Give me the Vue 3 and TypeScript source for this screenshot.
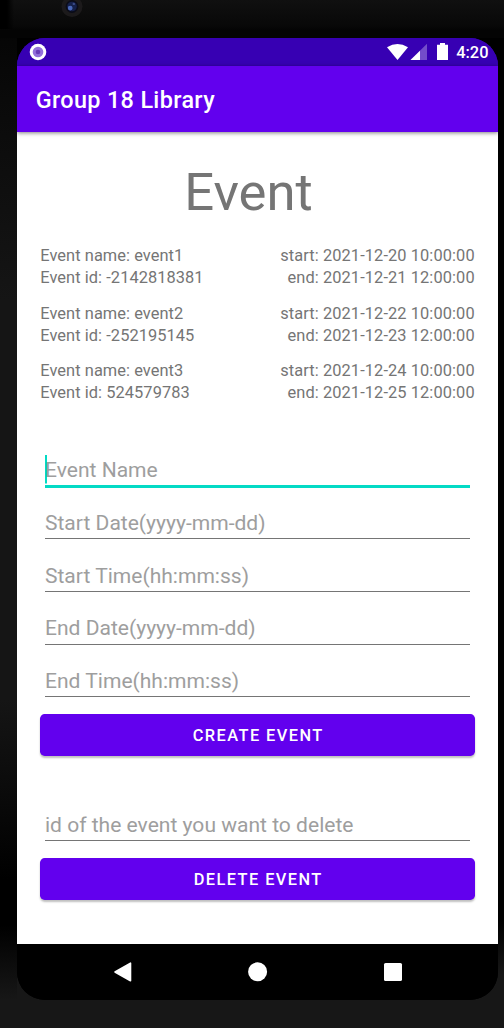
<script setup lang="ts">
interface LibraryEvent {
  name: string
  id: number
  start: string
  end: string
}

const events: LibraryEvent[] = [
  { name: 'event1', id: -2142818381, start: '2021-12-20 10:00:00', end: '2021-12-21 12:00:00' },
  { name: 'event2', id: -252195145, start: '2021-12-22 10:00:00', end: '2021-12-23 12:00:00' },
  { name: 'event3', id: 524579783, start: '2021-12-24 10:00:00', end: '2021-12-25 12:00:00' },
]

const fields: string[] = [
  'Event Name',
  'Start Date(yyyy-mm-dd)',
  'Start Time(hh:mm:ss)',
  'End Date(yyyy-mm-dd)',
  'End Time(hh:mm:ss)',
]
</script>

<template>
  <div class="device">
    <div class="bezel-top">
      <svg class="camera" width="22" height="22" viewBox="0 0 22 22">
        <circle cx="11" cy="11" r="10.5" fill="#1c1a1b" />
        <circle cx="11" cy="11" r="6.4" fill="#0b0c18" />
        <circle cx="11" cy="11" r="4.8" fill="#15204a" />
        <circle cx="9.2" cy="12.6" r="2.4" fill="#4a68b8" />
        <circle cx="12.8" cy="8.4" r="1.2" fill="#394a86" />
      </svg>
    </div>
    <div class="screen-well">
      <div class="screen">
        <header class="status">
          <svg class="record" width="18" height="18" viewBox="0 0 18 18">
            <circle cx="9" cy="9" r="8.3" fill="#fff" />
            <circle cx="9" cy="9" r="5.3" fill="#9370db" />
            <circle cx="9" cy="9" r="2.3" fill="#673ab7" />
          </svg>
          <svg class="indicators" width="62" height="18" viewBox="0 0 62 18">
            <path d="M0 4.2Q10.5 -2.4 21 4.2L10.5 17Z" fill="#fff" />
            <path d="M23.5 17L40 0.8V17Z" fill="#fff" fill-opacity=".3" />
            <path d="M23.5 17L33 7.7V17Z" fill="#fff" />
            <path d="M53 0h5v1.7h3V17H50V1.7h3Z" fill="#fff" />
          </svg>
          <span class="clock">4:20</span>
        </header>
        <div class="appbar">Group 18 Library</div>
        <main class="content">
          <h1 class="heading">Event</h1>
          <ul class="events">
            <li v-for="event in events" :key="event.id" class="event">
              <div>
                <div>Event name: {{ event.name }}</div>
                <div>Event id: {{ event.id }}</div>
              </div>
              <div class="times">
                <div>start: {{ event.start }}</div>
                <div>end: {{ event.end }}</div>
              </div>
            </li>
          </ul>
          <form class="create" @submit.prevent>
            <div v-for="(field, index) in fields" :key="field" class="field" :class="{ focused: index === 0 }">
              <input type="text" :placeholder="field" />
            </div>
            <button class="action" type="submit">Create event</button>
          </form>
          <form class="remove" @submit.prevent>
            <div class="field">
              <input type="text" placeholder="id of the event you want to delete" />
            </div>
            <button class="action" type="submit">Delete event</button>
          </form>
        </main>
        <nav class="navbar">
          <svg width="20" height="20" viewBox="0 0 20 20">
            <path d="M2 10L17.5 1.2V18.8Z" fill="#fff" stroke="#fff" stroke-width="1.6" stroke-linejoin="round" />
          </svg>
          <svg width="20" height="20" viewBox="0 0 20 20"><circle cx="9.6" cy="9.8" r="9.5" fill="#fff" /></svg>
          <svg width="20" height="20" viewBox="0 0 20 20"><rect x="1" y="1" width="18" height="18" rx="1.6" fill="#fff" /></svg>
        </nav>
      </div>
    </div>
  </div>
</template>

<style>
body {
  margin: 0;
  background: #000;
}
</style>

<style scoped>
.device {
  box-sizing: border-box;
  width: 504px;
  height: 1028px;
  overflow: hidden;
  font-family: Roboto, sans-serif;
  background:
    linear-gradient(#171717, #171717) 0 1000px / 504px 28px no-repeat,
    linear-gradient(#030303 0, #0a0a0a 100px, #151515 300px, #151515 700px, #000 880px, #000 925px, #171717 1000px) 0 0 / 17px 1028px no-repeat,
    linear-gradient(#000 0, #000 920px, #171717 975px) 498px 0 / 6px 1028px no-repeat,
    #000;
}
.bezel-top {
  height: 38px;
  box-sizing: border-box;
  background:
    linear-gradient(90deg, #000 7px, transparent 14px) 0 0 / 20px 29px no-repeat,
    linear-gradient(#101010, #080808 26px, #040404 30px, #040404);
}
.camera {
  display: block;
  margin-left: 60.5px;
  transform: translateY(-4.5px);
}
.screen-well {
  margin: 0 6px 0 17px;
  width: 481px;
  height: 962px;
  background: linear-gradient(#000 50%, #171717 50%);
}
.screen {
  height: 962px;
  border-radius: 28px;
  overflow: hidden;
  background: linear-gradient(#3700b3 50px, #fff 50px, #fff 900px, #000 900px);
  display: flex;
  flex-direction: column;
}
.status {
  height: 28px;
  flex: none;
  background: #3700b3;
  display: flex;
  align-items: center;
  padding: 0 9.5px 0 12px;
  color: #fff;
}
.record {
  flex: none;
}
.indicators {
  margin-left: auto;
  flex: none;
}
.clock {
  margin-left: 7.5px;
  font-size: 16.4px;
  font-weight: 500;
  line-height: 28px;
  padding-top: 1px;
}
.appbar {
  flex: none;
  height: 65.5px;
  box-sizing: border-box;
  padding: 2px 0 0 18.7px;
  line-height: 65.5px;
  font-size: 23.4px;
  font-weight: 500;
  letter-spacing: 0.35px;
  color: #fff;
  background: #6200ee;
  box-shadow: 0 1px 4px rgba(0, 0, 0, 0.5);
  z-index: 1;
}
.content {
  flex: 1;
  padding: 29px 23.3px 0;
  background: #fff;
}
.heading {
  margin: 0;
  font-size: 52.65px;
  font-weight: 400;
  line-height: 62px;
  text-align: center;
  color: #757575;
  padding-right: 18px;
}
.events {
  list-style: none;
  margin: 22.5px 0 0;
  padding: 0;
  color: #757575;
  font-size: 16.4px;
  line-height: 22.1px;
  letter-spacing: 0.06px;
}
.event {
  display: flex;
  justify-content: space-between;
  height: 57.5px;
}
.times {
  text-align: right;
  letter-spacing: 0.09px;
}
.create {
  margin-top: 29.5px;
}
.remove {
  margin-top: 45.8px;
}
.field {
  height: 52.7px;
  box-sizing: border-box;
  padding: 0 4.7px;
}
.field input {
  display: block;
  box-sizing: border-box;
  width: 100%;
  height: 39.5px;
  margin: 0;
  padding: 7px 0 0;
  border: 0;
  border-bottom: 1.2px solid #757575;
  outline: 0;
  background: transparent;
  color: #212121;
  font: 400 21.06px/28px Roboto, sans-serif;
}
.field input::placeholder {
  color: #9e9e9e;
  opacity: 1;
}
.field.focused input {
  height: 41px;
  border-bottom: 3px solid #03dac5;
  background: linear-gradient(#03dac5, #03dac5) 0 7.5px / 2px 28.5px no-repeat;
}
.action {
  display: block;
  width: 100%;
  height: 42px;
  margin: 3.5px 0 0;
  padding: 0 0 0 1.4px;
  border: 0;
  border-radius: 4.7px;
  background: #6200ee;
  box-shadow: 0 2px 2px rgba(0, 0, 0, 0.25);
  color: #fff;
  font: 500 16.4px/43px Roboto, sans-serif;
  letter-spacing: 1.42px;
  text-transform: uppercase;
}
.navbar {
  flex: none;
  height: 56px;
  box-sizing: border-box;
  background: #000;
  display: flex;
  align-items: center;
  justify-content: space-between;
  padding: 0 95px 0 95.5px;
}
</style>
